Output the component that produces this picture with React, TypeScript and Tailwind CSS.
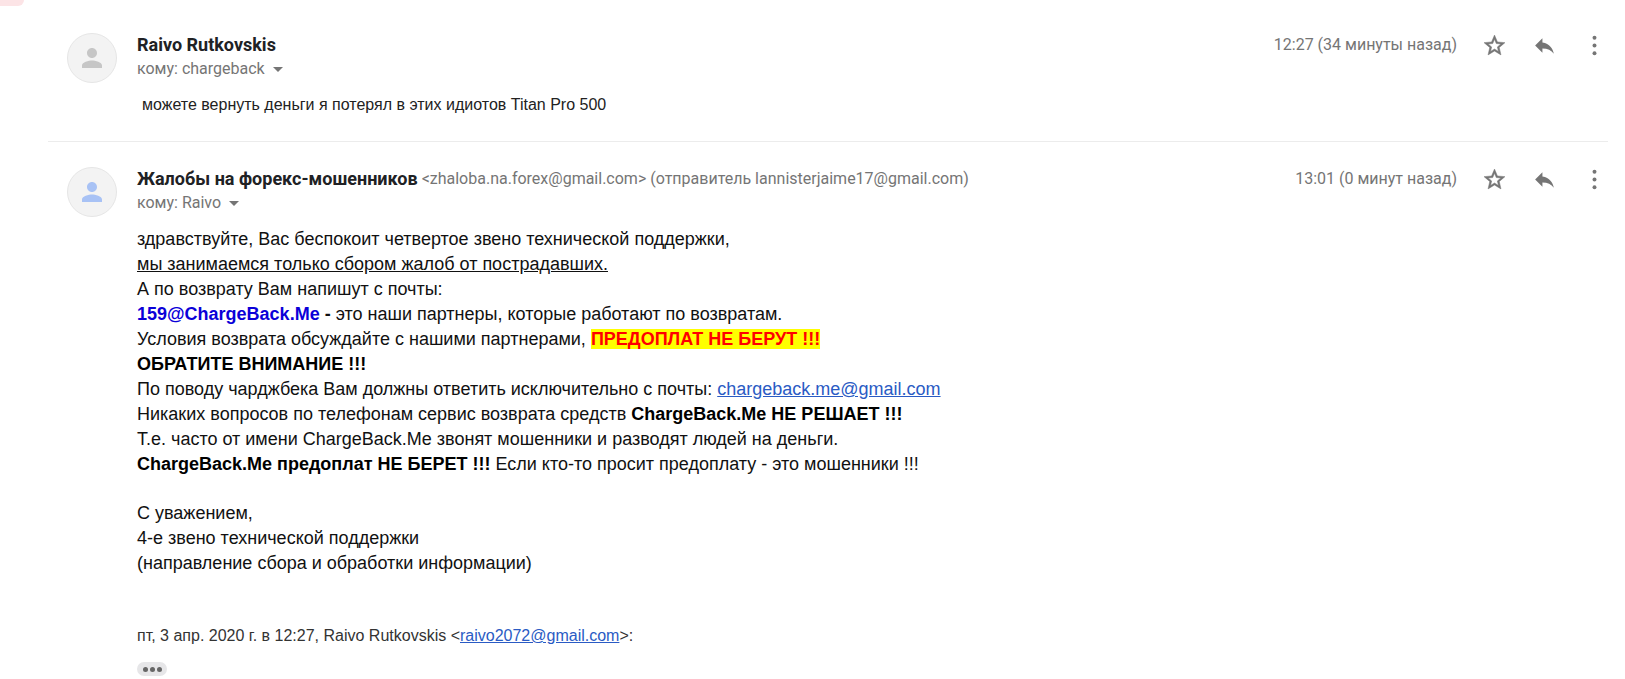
import type { ReactNode } from "react";

type MessageProps = {
  name: string;
  address?: string;
  to: string;
  time: string;
  avatarClass: string;
  className: string;
  children: ReactNode;
};

const linkClass = "text-[#2a5bc4] underline";
const iconButton = "flex size-[50px] items-center justify-center text-[#757575]";

function Avatar({ className }: { className: string }) {
  return (
    <div className="flex size-[50px] shrink-0 items-center justify-center rounded-full border border-[#e6e6e6] bg-[#f3f3f3]">
      <svg viewBox="0 0 24 24" className={"size-[30px] " + className} fill="currentColor" aria-hidden="true">
        <path d="M12 12c2.21 0 4-1.79 4-4s-1.79-4-4-4-4 1.790-4 4 1.790 4 4 4zm0 2c-2.670 0-8 1.340-8 4v2h16v-2c0-2.660-5.330-4-8-4z" />
      </svg>
    </div>
  );
}

function Actions() {
  return (
    <div className="-my-[13px] -mr-[11px] flex">
      <button type="button" className={iconButton} aria-label="Пометить">
        <svg viewBox="0 0 24 24" className="size-[25px]" fill="currentColor" stroke="currentColor" strokeWidth="0.5" aria-hidden="true">
          <path d="M22 9.24l-7.19-.62L12 2 9.19 8.63 2 9.24l5.46 4.73L5.82 21 12 17.27 18.18 21l-1.63-7.03L22 9.24zM12 15.4l-3.76 2.27 1-4.28-3.32-2.88 4.38-.38L12 6.1l1.71 4.04 4.38.38-3.32 2.88 1 4.28L12 15.4z" />
        </svg>
      </button>
      <button type="button" className={iconButton} aria-label="Ответить">
        <svg viewBox="0 0 24 24" className="size-[25px]" fill="currentColor" aria-hidden="true">
          <path d="M10 9V5l-7 7 7 7v-4.1c5 0 8.5 1.6 11 5.1-1-5-4-10-11-11z" />
        </svg>
      </button>
      <button type="button" className={iconButton} aria-label="Ещё">
        <svg viewBox="0 0 24 24" className="size-[25px]" fill="currentColor" aria-hidden="true">
          <circle cx="12" cy="4.6" r="1.9" />
          <circle cx="12" cy="12" r="1.9" />
          <circle cx="12" cy="19.4" r="1.9" />
        </svg>
      </button>
    </div>
  );
}

function Message({ name, address, to, time, avatarClass, className, children }: MessageProps) {
  return (
    <article className={"ml-12 mr-[17px] flex gap-5 pl-[19px] " + className}>
      <Avatar className={avatarClass} />
      <div className="min-w-0 flex-1">
        <header className="font-[Roboto,sans-serif] text-base leading-6 text-[#757575]">
          <div className="flex items-center">
            <h2 className="text-lg leading-6 font-bold text-[#202124]">{name}</h2>
            {address && <span className="ml-1">{address}</span>}
            <time className="mr-3 ml-auto">{time}</time>
            <Actions />
          </div>
          <button type="button" className="flex items-center gap-2">
            <span>кому: {to}</span>
            <svg viewBox="0 0 10 5" className="h-[5px] w-[10px]" fill="currentColor" aria-hidden="true">
              <path d="M0 0h10L5 5z" />
            </svg>
          </button>
        </header>
        {children}
      </div>
    </article>
  );
}

export default function App() {
  return (
    <main className="min-h-screen overflow-hidden bg-white font-['Liberation_Sans',Arial,sans-serif] text-[#111]">
      <div className="h-[6px] w-6 rounded-br-[10px] bg-[#fce4e6]" />
      <Message
        name="Raivo Rutkovskis"
        to="chargeback"
        time="12:27 (34 минуты назад)"
        avatarClass="text-[#c6c6c6]"
        className="border-b border-[#ececec] pt-[27px] pb-6"
      >
        <p className="mt-3 pl-[5px] text-base leading-6 text-[#222]">
          можете вернуть деньги я потерял в этих идиотов Titan Pro 500
        </p>
      </Message>
      <Message
        name="Жалобы на форекс-мошенников"
        address="<zhaloba.na.forex@gmail.com> (отправитель lannisterjaime17@gmail.com)"
        to="Raivo"
        time="13:01 (0 минут назад)"
        avatarClass="text-[#a8c2f5]"
        className="pt-[25px]"
      >
        <div className="mt-3 text-lg leading-[25px]">
          <p>здравствуйте, Вас беспокоит четвертое звено технической поддержки,</p>
          <p className="underline">мы занимаемся только сбором жалоб от пострадавших.</p>
          <p>А по возврату Вам напишут с почты:</p>
          <p>
            <b className="text-[#0b00d8]">159@ChargeBack.Me</b> <b>-</b> это наши партнеры, которые работают по возвратам.
          </p>
          <p>
            Условия возврата обсуждайте с нашими партнерами,{" "}
            <b className="bg-[#ffff00] text-[#f00]">ПРЕДОПЛАТ НЕ БЕРУТ !!!</b>
          </p>
          <p className="font-bold text-black">ОБРАТИТЕ ВНИМАНИЕ !!!</p>
          <p>
            По поводу чарджбека Вам должны ответить исключительно с почты:{" "}
            <a href="mailto:chargeback.me@gmail.com" className={linkClass}>chargeback.me@gmail.com</a>
          </p>
          <p>
            Никаких вопросов по телефонам сервис возврата средств{" "}
            <b className="text-black">ChargeBack.Me НЕ РЕШАЕТ !!!</b>
          </p>
          <p>Т.е. часто от имени ChargeBack.Me звонят мошенники и разводят людей на деньги.</p>
          <p>
            <b className="text-black">ChargeBack.Me предоплат НЕ БЕРЕТ !!!</b> Если кто-то просит предоплату - это мошенники !!!
          </p>
          <p className="mt-6">С уважением,</p>
          <p>4-е звено технической поддержки</p>
          <p>(направление сбора и обработки информации)</p>
        </div>
        <p className="mt-12 text-base leading-6 text-[#333]">
          пт, 3 апр. 2020 г. в 12:27, Raivo Rutkovskis &lt;
          <a href="mailto:raivo2072@gmail.com" className={linkClass}>raivo2072@gmail.com</a>&gt;:
        </p>
        <button
          type="button"
          aria-label="Показать скрытый текст"
          className="mt-[14px] flex h-[14px] w-[30px] items-center justify-center gap-[2px] rounded-full bg-[#e6e6e8]"
        >
          <span className="size-[5px] rounded-full bg-[#666]" />
          <span className="size-[5px] rounded-full bg-[#666]" />
          <span className="size-[5px] rounded-full bg-[#666]" />
        </button>
      </Message>
    </main>
  );
}
